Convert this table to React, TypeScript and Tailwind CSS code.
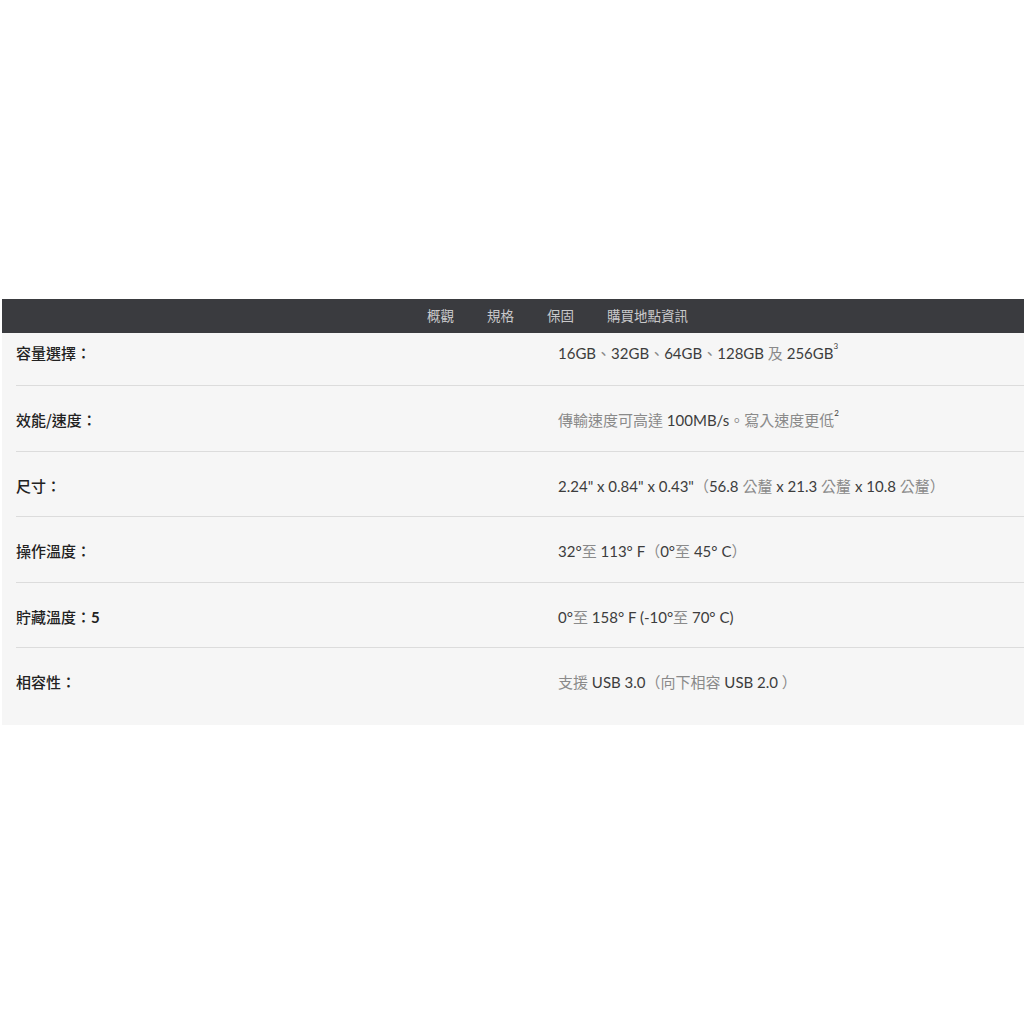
import React from "react";

const C = ({ children }: { children: React.ReactNode }) => (
  <span className="text-[#8a8a8a]">{children}</span>
);

const rows: { label: React.ReactNode; value: React.ReactNode }[] = [
  {
    label: "容量選擇：",
    value: (
      <>
        16GB<C>、</C>32GB<C>、</C>64GB<C>、</C>128GB <C>及</C> 256GB
        <sup className="text-[8px] align-[6px]">3</sup>
      </>
    ),
  },
  {
    label: "效能/速度：",
    value: (
      <>
        <C>傳輸速度可高達</C> 100MB/s<C>。寫入速度更低</C>
        <sup className="text-[8px] align-[6px]">2</sup>
      </>
    ),
  },
  {
    label: "尺寸：",
    value: (
      <>
        2.24" x 0.84" x 0.43"<C>（</C>56.8 <C>公釐</C> x 21.3 <C>公釐</C> x 10.8 <C>公釐）</C>
      </>
    ),
  },
  {
    label: "操作溫度：",
    value: (
      <>
        32°<C>至</C> 113° F<C>（</C>0°<C>至</C> 45° C<C>）</C>
      </>
    ),
  },
  {
    label: (
      <>
        貯藏溫度：<span className="font-['Lato'] font-bold">5</span>
      </>
    ),
    value: (
      <>
        0°<C>至</C> 158° F (-10°<C>至</C> 70° C)
      </>
    ),
  },
  {
    label: "相容性：",
    value: (
      <>
        <C>支援</C> USB 3.0<C>（向下相容</C> USB 2.0 <C>）</C>
      </>
    ),
  },
];

export default function App() {
  return (
    <div className="w-[1024px] h-[1024px] bg-white pt-[299px] pl-[2px]">
      <nav className="h-[34px] bg-[#3a3b3f] flex items-center pb-[2px] pl-[425px] gap-[33px] text-[13.5px] text-[#c9c9cb] font-['Noto_Sans_CJK_TC',sans-serif]">
        <span>概觀</span>
        <span>規格</span>
        <span>保固</span>
        <span>購買地點資訊</span>
      </nav>
      <div className="bg-[#f6f6f6] pl-[14px] pb-[12px]">
        {rows.map((r, i) => (
          <div
            key={i}
            className={
              "flex items-center " +
              (i === 0 ? "pt-[10px] pb-[22px]" : "border-t border-[#dcdcdc] pt-[24px] pb-[20.5px]")
            }
          >
            <div className="w-[542px] text-[15px] leading-[20px] font-medium text-[#222] font-['Noto_Sans_CJK_TC',serif]">
              {r.label}
            </div>
            <div className="text-[15px] leading-[20px] text-[#3d3d3d] font-['Lato','Noto_Sans_CJK_TC',sans-serif]">
              {r.value}
            </div>
          </div>
        ))}
      </div>
    </div>
  );
}
